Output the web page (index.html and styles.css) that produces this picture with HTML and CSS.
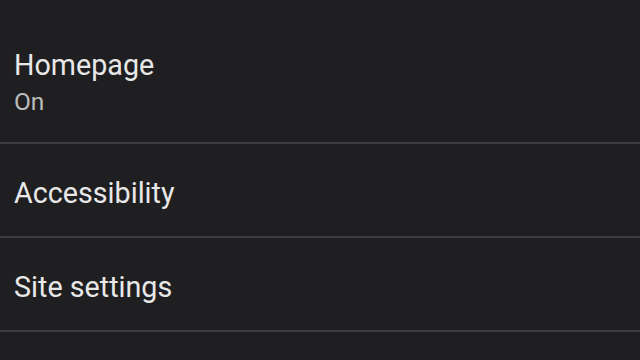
FILE: index.html
```html
<!DOCTYPE html>
<html>
<head>
<meta charset="utf-8">
<link rel="stylesheet" href="styles.css">
</head>
<body>
<div class="list">
  <div class="item item-two">
    <div class="title">Homepage</div>
    <div class="summary">On</div>
  </div>
  <div class="item">
    <div class="title">Accessibility</div>
  </div>
  <div class="item">
    <div class="title">Site settings</div>
  </div>
</div>
</body>
</html>
```

FILE: styles.css
```css
html, body {
  margin: 0;
  padding: 0;
  background: #1f1f21;
  width: 640px;
  height: 360px;
  overflow: hidden;
}
.list {
  display: flex;
  flex-direction: column;
  font-family: Roboto, "Noto Sans", sans-serif;
}
.item {
  padding: 32px 14px 26px;
  border-bottom: 2px solid #3d3d40;
}
.item-two {
  padding: 48px 14px 25px;
}
.title {
  font-size: 28.7px;
  line-height: 34px;
  color: #e8e8e8;
}
.summary {
  margin-top: 5px;
  font-size: 24.5px;
  line-height: 30px;
  color: #bcbcbc;
}
```
